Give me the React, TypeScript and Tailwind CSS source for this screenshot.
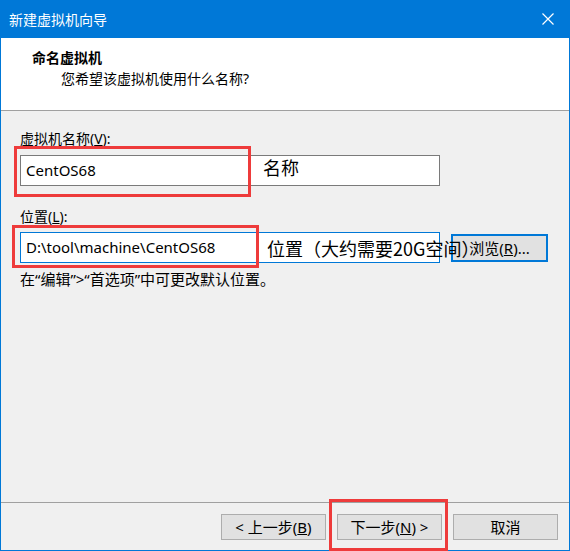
const ui = { fontFamily: '"Noto Sans", "Noto Sans CJK SC", sans-serif' };
const cjk = { fontFamily: '"Noto Sans CJK SC", sans-serif' };

const WizardButton = ({ children }: { children: React.ReactNode }) => (
  <button className="w-[105px] h-[26px] border border-[#adadad] bg-[#e1e1e1] text-[15px] leading-[20px] text-black flex items-center justify-center">
    {children}
  </button>
);

const App = () => {
  return (
    <div
      className="relative w-[570px] h-[551px] flex flex-col bg-[#f0f0f0] border-x border-b border-[#0078d7] text-black select-none"
      style={ui}
    >
      {/* Title bar */}
      <div className="h-[38px] -mx-px bg-[#0078d7] flex items-center justify-between pl-[9px] pr-[16px] shrink-0">
        <span className="text-white text-[14px] leading-[20px]" style={cjk}>
          新建虚拟机向导
        </span>
        <svg width="12" height="12" viewBox="0 0 12 12" className="text-white">
          <path d="M0.5 0.5L11.5 11.5M11.5 0.5L0.5 11.5" stroke="currentColor" strokeWidth="1.2" />
        </svg>
      </div>

      {/* Header */}
      <div className="h-[73px] bg-white border-b border-[#a0a0a0] pt-[9px] shrink-0">
        <div className="pl-[31px] text-[14px] leading-[20px] font-bold" style={cjk}>
          命名虚拟机
        </div>
        <div className="pl-[60px] mt-[2px] text-[14px] leading-[20px]">您希望该虚拟机使用什么名称?</div>
      </div>

      {/* Form */}
      <div className="flex-1 flex flex-col pl-[19px] pt-[18px]">
        <div className="text-[14px] leading-[20px]">
          虚拟机名称(<u>V</u>):
        </div>
        <div className="mt-[6px] w-[420px] h-[31px] bg-white border border-[#7a7a7a] flex items-center pl-[5px] text-[15px]">
          CentOS68
        </div>

        <div className="mt-[21px] text-[14px] leading-[20px]">
          位置(<u>L</u>):
        </div>
        <div className="mt-[5px] flex items-center">
          <div className="w-[420px] h-[31px] bg-white border border-[#0078d7] flex items-center pl-[5px] text-[15px]">
            D:\tool\machine\CentOS68
          </div>
          <button className="ml-[11px] w-[97px] h-[28px] border-2 border-[#0078d7] bg-[#e1e1e1] text-[15px] leading-[20px] flex items-center justify-center">
            浏览(<u>R</u>)...
          </button>
        </div>
        <div className="mt-[6px] text-[15px] leading-[20px]">在“编辑”&gt;“首选项”中可更改默认位置。</div>
      </div>

      {/* Footer */}
      <div className="h-[48px] border-t border-[#a0a0a0] flex justify-end gap-[11px] pt-[11px] pr-[11px] shrink-0">
        <WizardButton>
          &lt; 上一步(<u>B</u>)
        </WizardButton>
        <WizardButton>
          下一步(<u>N</u>) &gt;
        </WizardButton>
        <WizardButton>取消</WizardButton>
      </div>

      {/* Annotations */}
      <div className="absolute left-[13px] top-[146px] w-[237px] h-[51px] border-[3px] border-[#ee3b3b]" />
      <div className="absolute left-[11px] top-[225px] w-[247px] h-[43px] border-[3px] border-[#ee3b3b]" />
      <div className="absolute left-[328px] top-[499px] w-[119px] h-[52px] border-[3px] border-[#ee3b3b]" />
      <div className="absolute left-[262px] top-[155px] text-[18px] leading-[24px]" style={cjk}>
        名称
      </div>
      <div className="absolute left-[266px] top-[236px] text-[18px] leading-[24px]" style={cjk}>
        位置（大约需要20G空间）
      </div>
    </div>
  );
};

export default App;
